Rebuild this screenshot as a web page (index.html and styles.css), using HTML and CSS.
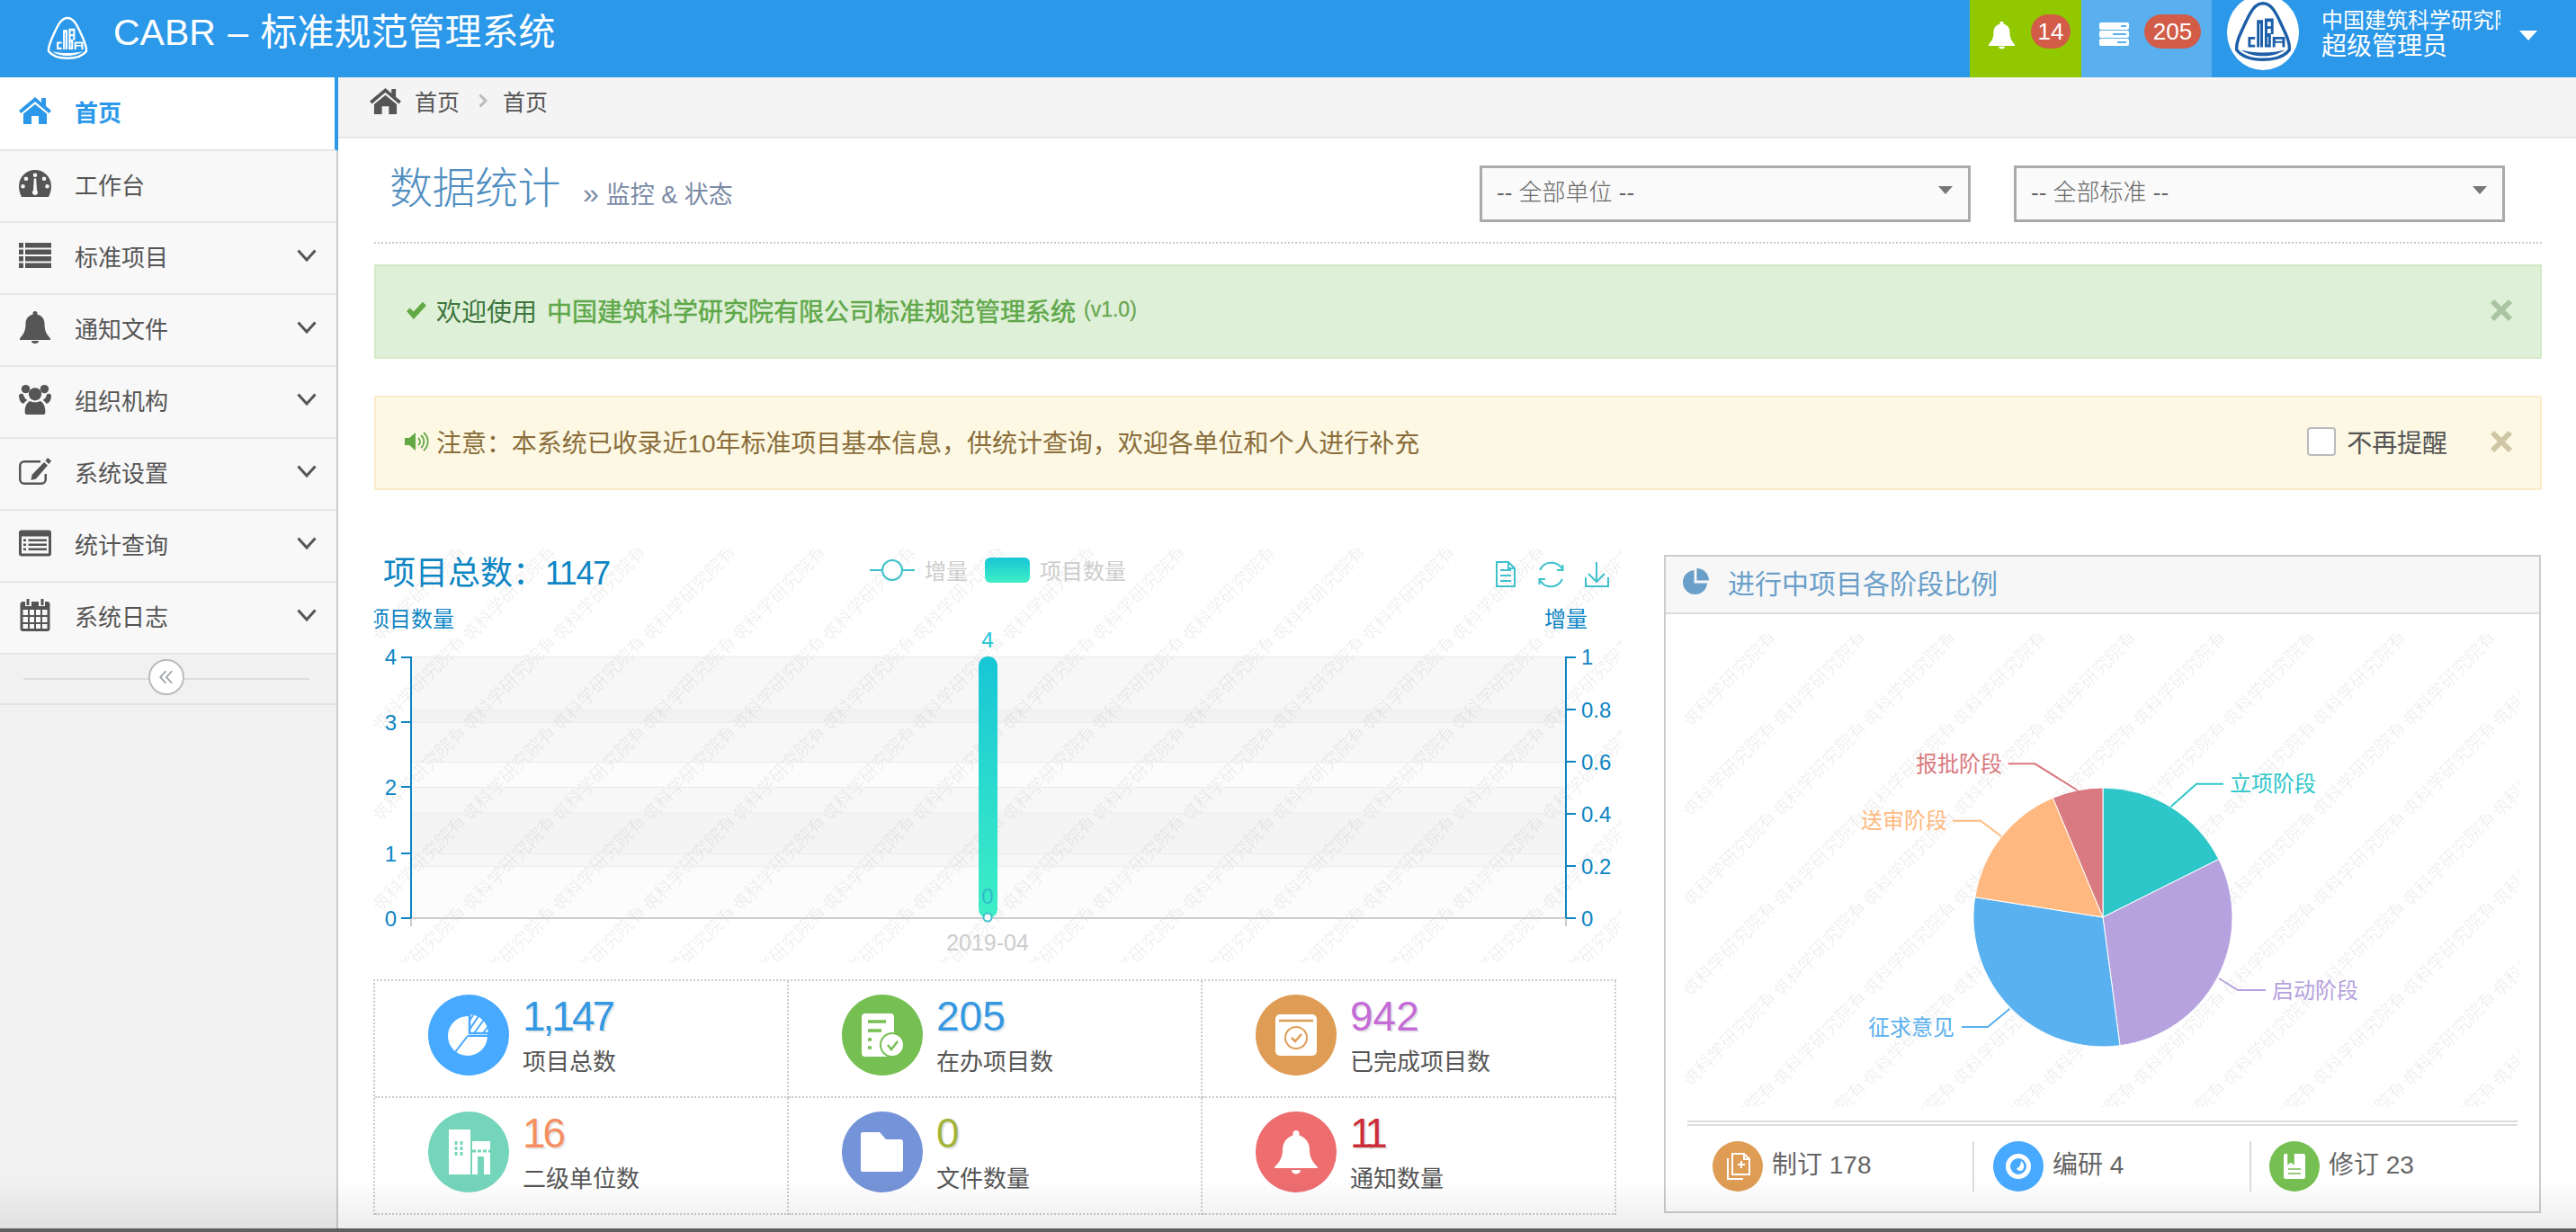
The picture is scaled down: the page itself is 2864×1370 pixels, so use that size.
FILE: index.html
```html
<!DOCTYPE html>
<html lang="zh-CN">
<head>
<meta charset="utf-8">
<title>CABR - 标准规范管理系统</title>
<link rel="stylesheet" href="styles.css">
</head>
<body>
<svg class="defs" width="0" height="0" aria-hidden="true">
  <defs>
    <symbol id="i-home" viewBox="0 0 36 30"><path d="M18 0L0 15l2.500 3L18 5l15.500 13 2.500-3-6-5V1h-5v5zM18 8L5 18.500V30h9v-9h8v9h9V18.500z"/></symbol>
    <symbol id="i-dash" viewBox="0 0 36 30"><path fill-rule="evenodd" d="M18 0A18 18 0 0 0 0 18c0 4 1 8 3 12h30c2-4 3-8 3-12A18 18 0 0 0 18 0zM18 3.500a2.300 2.300 0 1 1 0 4.600 2.300 2.300 0 0 1 0-4.600zM8 7.500a2.300 2.300 0 1 1 0 4.600 2.300 2.300 0 0 1 0-4.600zM28 7.500a2.300 2.300 0 1 1 0 4.600 2.300 2.300 0 0 1 0-4.600zM4.500 16a2.300 2.300 0 1 1 0 4.600 2.300 2.300 0 0 1 0-4.600zM31.500 16a2.300 2.300 0 1 1 0 4.600 2.300 2.300 0 0 1 0-4.600zM16.800 9.500h2.400l.8 13.200a3 3 0 1 1-4 0z"/></symbol>
    <symbol id="i-list" viewBox="0 0 36 28"><path d="M0 0h5v5.500H0zM7 0h29v5.500H7zM0 7.500h5V13H0zM7 7.500h29V13H7zM0 15h5v5.500H0zM7 15h29v5.500H7zM0 22.500h5V28H0zM7 22.500h29V28H7z"/></symbol>
    <symbol id="i-bell" viewBox="0 0 34 36"><path d="M17 0a2.500 2.500 0 0 1 2.500 2.500v1.200C25 5 27.500 9 27.500 14c0 9 3 12 6.500 16.500V32H0v-1.500C3.500 26 6.500 23 6.500 14 6.500 9 9 5 14.500 3.700V2.500A2.500 2.500 0 0 1 17 0zM13 33h8a4 3 0 0 1-8 0z"/></symbol>
    <symbol id="i-group" viewBox="0 0 38 36"><circle cx="8" cy="6" r="5"/><circle cx="30" cy="6" r="5"/><circle cx="19" cy="12" r="7.500"/><path d="M0 13c2-2 4-2 5-1 1 4 3 6 5 7-2 1-3 2-4 4-3 0-6-3-6-10zM38 13c-2-2-4-2-5-1-1 4-3 6-5 7 2 1 3 2 4 4 3 0 6-3 6-10zM10 36c-2 0-3-1-3-3 0-7 2-11 6-13 3 2 9 2 12 0 4 2 6 6 6 13 0 2-1 3-3 3z"/></symbol>
    <symbol id="i-edit" viewBox="0 0 36 30"><path d="M6 3h18v2.500H6A3.500 3.500 0 0 0 2.500 9v15A3.500 3.500 0 0 0 6 27.500h19a3.500 3.500 0 0 0 3.500-3.500v-6H31v6a6 6 0 0 1-6 6H6a6 6 0 0 1-6-6V9a6 6 0 0 1 6-6z"/><path d="M32 0l4 3.500L33.500 7l-4-3.500zM28 5l4 3.500-13 15-5.500 1.500 1-6z"/></symbol>
    <symbol id="i-listalt" viewBox="0 0 36 29"><path fill-rule="evenodd" d="M3 0h30a3 3 0 0 1 3 3v23a3 3 0 0 1-3 3H3a3 3 0 0 1-3-3V3a3 3 0 0 1 3-3zM3 7v19h30V7z"/><path d="M5 10h3v2.500H5zM10.500 10H31v2.500H10.500zM5 15h3v2.500H5zM10.500 15H31v2.500H10.500zM5 20h3v2.500H5zM10.500 20H31v2.500H10.500z"/></symbol>
    <symbol id="i-cal" viewBox="0 0 33 36"><path fill-rule="evenodd" d="M7 0h3v7H7zM23 0h3v7h-3zM3 3h2.500v5h7V3h8v5h7V3H30a3 3 0 0 1 3 3v27a3 3 0 0 1-3 3H3a3 3 0 0 1-3-3V6a3 3 0 0 1 3-3zM3 12v6h5.500v-6zM10.500 12v6h5v-6zM17.500 12v6h5v-6zM24.500 12v6H30v-6zM3 20v6h5.500v-6zM10.500 20v6h5v-6zM17.500 20v6h5v-6zM24.500 20v6H30v-6zM3 28v5h5.500v-5zM10.500 28v5h5v-5zM17.500 28v5h5v-5zM24.500 28v5H30v-5z"/></symbol>
    <symbol id="i-chev" viewBox="0 0 22 14"><path d="M1.500 1.500L11 12l9.500-10.500" fill="none" stroke="currentColor" stroke-width="3"/></symbol>
    <symbol id="i-logo" viewBox="0 0 80 80">
      <path d="M40 7C49 7 54 16 60 29c6 13 11 22 10 31-6 8-18 11-30 11s-24-3-30-11c-1-9 4-18 10-31C26 16 31 7 40 7z" fill="none" stroke="currentColor" stroke-width="3.500"/>
      <path d="M15 60c7 5 16 7 25 7s18-2 25-7c-7 2-16 3-25 3s-18-1-25-3z"/>
      <path d="M23 57V45h8v3h-5v6h5v3zM33 57V26h7v31h-3V30h-1v27zM42 57V24h10v18h-3v15h-7zM45 28v5h4v-5zM45 36v5h4v-5zM45 45v9h1v-9zM51 57V45h14v12h-3v-5h-8v5zM54 48v2h8v-2z"/>
    </symbol>
    <pattern id="wm-chart" patternUnits="userSpaceOnUse" x="416" y="610" width="100" height="100">
      <text class="wm-text" transform="translate(50 50) rotate(-46)" text-anchor="middle" dominant-baseline="central">中国建筑科学研究院有限公司</text>
    </pattern>
    <pattern id="wm-pie" patternUnits="userSpaceOnUse" x="1873" y="705" width="100" height="100">
      <text class="wm-text" transform="translate(50 50) rotate(-46)" text-anchor="middle" dominant-baseline="central">中国建筑科学研究院有限公司</text>
    </pattern>
    <linearGradient id="bar-g" x1="0" y1="0" x2="0" y2="1">
      <stop offset="0" stop-color="#17c6d6"/><stop offset="1" stop-color="#3eefc6"/>
    </linearGradient>
  </defs>
</svg>

<div class="app">
  <header class="topbar">
    <svg class="brand-logo"><use href="#i-logo"/></svg>
    <div class="brand-title">CABR – 标准规范管理系统</div>
    <div class="top-notice">
      <svg class="top-bell"><use href="#i-bell"/></svg>
      <span class="badge">14</span>
    </div>
    <div class="top-tasks">
      <svg class="top-server" viewBox="0 0 33 26">
        <path fill="#fff" d="M2 0h29a2 2 0 0 1 2 2v4a2 2 0 0 1-2 2H2a2 2 0 0 1-2-2V2a2 2 0 0 1 2-2zM2 9h29a2 2 0 0 1 2 2v4a2 2 0 0 1-2 2H2a2 2 0 0 1-2-2v-4a2 2 0 0 1 2-2zM2 18h29a2 2 0 0 1 2 2v4a2 2 0 0 1-2 2H2a2 2 0 0 1-2-2v-4a2 2 0 0 1 2-2z"/>
        <path fill="#5aafef" d="M24 3h6v2h-6zM15 12h15v2H15zM20 21h10v2H20z"/>
      </svg>
      <span class="badge badge-wide">205</span>
    </div>
    <div class="top-user">
      <div class="avatar"><svg class="avatar-logo"><use href="#i-logo"/></svg></div>
      <div class="user-text">
        <div class="user-org">中国建筑科学研究院有限公司</div>
        <div class="user-role">超级管理员</div>
      </div>
      <span class="user-caret"></span>
    </div>
  </header>

  <div class="layout">
    <nav class="sidebar">
      <ul class="menu">
        <li class="menu-item active"><svg class="menu-icon"><use href="#i-home"/></svg><span>首页</span></li>
        <li class="menu-item"><svg class="menu-icon"><use href="#i-dash"/></svg><span>工作台</span></li>
        <li class="menu-item"><svg class="menu-icon"><use href="#i-list"/></svg><span>标准项目</span><svg class="menu-chev"><use href="#i-chev"/></svg></li>
        <li class="menu-item"><svg class="menu-icon"><use href="#i-bell"/></svg><span>通知文件</span><svg class="menu-chev"><use href="#i-chev"/></svg></li>
        <li class="menu-item"><svg class="menu-icon"><use href="#i-group"/></svg><span>组织机构</span><svg class="menu-chev"><use href="#i-chev"/></svg></li>
        <li class="menu-item"><svg class="menu-icon"><use href="#i-edit"/></svg><span>系统设置</span><svg class="menu-chev"><use href="#i-chev"/></svg></li>
        <li class="menu-item"><svg class="menu-icon"><use href="#i-listalt"/></svg><span>统计查询</span><svg class="menu-chev"><use href="#i-chev"/></svg></li>
        <li class="menu-item"><svg class="menu-icon"><use href="#i-cal"/></svg><span>系统日志</span><svg class="menu-chev"><use href="#i-chev"/></svg></li>
      </ul>
      <div class="collapser">
        <span class="collapse-btn">
          <svg class="collapse-ico" viewBox="0 0 16 16"><path d="M7.500 2L2 8l5.500 6M13.500 2L8 8l5.500 6" fill="none" stroke="#9aa0a6" stroke-width="1.600"/></svg>
        </span>
      </div>
    </nav>

    <main class="main">
      <div class="crumbs">
        <svg class="crumb-home"><use href="#i-home"/></svg>
        <span>首页</span>
        <svg class="crumb-sep" viewBox="0 0 10 16"><path d="M1.500 1.500L8 8l-6.500 6.500" fill="none" stroke="#bbb" stroke-width="3"/></svg>
        <span>首页</span>
      </div>

      <div class="content">
        <div class="page-head">
          <h1 class="page-title">数据统计<small class="page-sub"><span class="page-sub-mark">»</span>监控 &amp; 状态</small></h1>
          <div class="selects">
            <div class="select"><span>-- 全部单位 --</span><i class="select-caret"></i></div>
            <div class="select"><span>-- 全部标准 --</span><i class="select-caret"></i></div>
          </div>
        </div>

        <div class="alert alert-ok">
          <svg class="alert-ico" viewBox="0 0 24 20"><path d="M2 11l3.500-3.500 4 4L19 1l4 4L9.500 19.500z" fill="#62a944"/></svg>
          <span>欢迎使用</span>
          <b class="alert-strong">中国建筑科学研究院有限公司标准规范管理系统</b>
          <span class="alert-ver">(v1.0)</span>
          <svg class="alert-close" viewBox="0 0 26 26"><path d="M3 3l20 20M23 3L3 23" stroke="#aac5a2" stroke-width="6"/></svg>
        </div>

        <div class="alert alert-warn">
          <svg class="alert-ico alert-ico-sound" viewBox="0 0 27 24">
            <path d="M0 8h5l7-6v20l-7-6H0z" fill="#62a944"/>
            <path d="M15 8a5 5 0 0 1 0 8M18 5a9 9 0 0 1 0 14M21 2a13 13 0 0 1 0 20" fill="none" stroke="#62a944" stroke-width="1.800"/>
          </svg>
          <span>注意：本系统已收录近10年标准项目基本信息，供统计查询，欢迎各单位和个人进行补充</span>
          <label class="alert-check"><i class="checkbox"></i>不再提醒</label>
          <svg class="alert-close alert-close-warn" viewBox="0 0 26 26"><path d="M3 3l20 20M23 3L3 23" stroke="#cfc6a6" stroke-width="6"/></svg>
        </div>

        <div class="dash">
          <section class="dash-left">
            <svg class="chart" viewBox="416 590 1386 480">
              <rect x="416" y="610" width="1386" height="460" fill="url(#wm-chart)"/>
              <g class="bands">
                <rect x="457" y="730" width="1284" height="59" fill="#000" fill-opacity=".03"/>
                <rect x="457" y="789" width="1284" height="14" fill="#000" fill-opacity=".05"/>
                <rect x="457" y="803" width="1284" height="44" fill="#000" fill-opacity=".03"/>
                <rect x="457" y="847" width="1284" height="28" fill="#000" fill-opacity=".012"/>
                <rect x="457" y="875" width="1284" height="29" fill="#000" fill-opacity=".03"/>
                <rect x="457" y="904" width="1284" height="45" fill="#000" fill-opacity=".045"/>
                <rect x="457" y="949" width="1284" height="14" fill="#000" fill-opacity=".03"/>
                <rect x="457" y="963" width="1284" height="58" fill="#000" fill-opacity=".012"/>
              </g>
              <path class="split" d="M457 730.500H1741M457 789.500H1741M457 803.500H1741M457 847.500H1741M457 875.500H1741M457 904.500H1741M457 949.500H1741M457 963.500H1741"/>
              <path class="x-axis" d="M457 1021H1741M457 1021v9M1741 1021v9"/>
              <path class="y-axis" d="M457 730v291M446 731h11M446 803h11M446 875h11M446 949h11M446 1021h11M1741 730v291M1741 731h11M1741 789h11M1741 847h11M1741 905h11M1741 963h11M1741 1021h11"/>
              <text class="c-title" x="426" y="637">项目总数：<tspan class="c-title-num">1147</tspan></text>
              <g class="c-legend">
                <path class="leg-line" d="M967 634h14M1003 634h14"/>
                <circle class="leg-line" cx="992" cy="634" r="11"/>
                <text x="1028" y="635">增量</text>
                <rect x="1095" y="620" width="50" height="28" rx="6" fill="url(#bar-g)"/>
                <text x="1156" y="635">项目数量</text>
              </g>
              <g class="tool">
                <path d="M1664 625h13l7 7v20h-20zM1677 625v7h7M1668 634h12M1668 640h12M1668 646h12"/>
                <path d="M1712 634a14 14 0 0 1 25-1M1737 644a14 14 0 0 1-25 1M1731 634h6.500v-6M1718 644h-6.500v6"/>
                <path d="M1775 625v22M1766 638l9 9 9-9M1763 642v10h25v-10"/>
              </g>
              <text class="c-axis-name" x="457" y="688" text-anchor="middle">项目数量</text>
              <text class="c-axis-name" x="1741" y="688" text-anchor="middle">增量</text>
              <g class="c-tick" text-anchor="end">
                <text x="441" y="730">4</text><text x="441" y="803">3</text><text x="441" y="875">2</text><text x="441" y="949">1</text><text x="441" y="1021">0</text>
              </g>
              <g class="c-tick">
                <text x="1758" y="730">1</text><text x="1758" y="789">0.8</text><text x="1758" y="847">0.6</text><text x="1758" y="905">0.4</text><text x="1758" y="963">0.2</text><text x="1758" y="1021">0</text>
              </g>
              <rect x="1088" y="730" width="21" height="291" rx="10" fill="url(#bar-g)"/>
              <text class="c-val" x="1098" y="711" text-anchor="middle">4</text>
              <text class="c-val c-val-in" x="1098" y="996" text-anchor="middle">0</text>
              <circle class="c-dot" cx="1098" cy="1020" r="4.500"/>
              <text class="c-date" x="1098" y="1048" text-anchor="middle">2019-04</text>
            </svg>

            <div class="stats">
              <div class="stat">
                <span class="stat-ico bg-blue">
                  <svg class="stat-svg" viewBox="0 0 50 50"><circle cx="24" cy="26" r="22" fill="#fff"/><path d="M26 1a22 22 0 0 1 22 22H26z" fill="#fff" stroke="#47a9ff" stroke-width="2.500"/><path d="M30 3l-4 6M36 4L26 19M42 8L31 23M47 15l-6 8" stroke="#47a9ff" stroke-width="2"/><path d="M24 26L10 44M24 26h22" stroke="#47a9ff" stroke-width="2"/></svg>
                </span>
                <div class="stat-body"><div class="stat-num c-blue n-tight">1,147</div><div class="stat-label">项目总数</div></div>
              </div>
              <div class="stat">
                <span class="stat-ico bg-green">
                  <svg class="stat-svg" viewBox="0 0 50 50"><path d="M6 1h28a4 4 0 0 1 4 4v44H6a4 4 0 0 1-4-4V5a4 4 0 0 1 4-4z" fill="#fff"/><path d="M9 10h20M9 20h15M9 30h4M9 39h4" stroke="#76bf52" stroke-width="3.500"/><circle cx="36" cy="36" r="13" fill="#fff" stroke="#76bf52" stroke-width="2"/><path d="M31 36l4 5 7-9" fill="none" stroke="#76bf52" stroke-width="2.500"/></svg>
                </span>
                <div class="stat-body"><div class="stat-num c-blue">205</div><div class="stat-label">在办项目数</div></div>
              </div>
              <div class="stat">
                <span class="stat-ico bg-orange">
                  <svg class="stat-svg" viewBox="0 0 50 50"><rect x="2" y="2" width="46" height="46" rx="5" fill="#fff"/><path d="M6 9h38" stroke="#de9c55" stroke-width="2.500"/><circle cx="25" cy="28" r="12" fill="none" stroke="#de9c55" stroke-width="2"/><path d="M20 28l4 4 7-8" fill="none" stroke="#de9c55" stroke-width="2.500"/></svg>
                </span>
                <div class="stat-body"><div class="stat-num c-purple">942</div><div class="stat-label">已完成项目数</div></div>
              </div>
              <div class="stat">
                <span class="stat-ico bg-teal">
                  <svg class="stat-svg" viewBox="0 0 50 50"><path d="M3 0h24v50H3zM29 13h20v37h-7V30H35v20h-6z" fill="#fff"/><path d="M11 13v18M17 13v18M29 24h20" stroke="#74d5bb" stroke-width="3" stroke-dasharray="4 2"/></svg>
                </span>
                <div class="stat-body"><div class="stat-num c-coral n-tight">16</div><div class="stat-label">二级单位数</div></div>
              </div>
              <div class="stat">
                <span class="stat-ico bg-indigo">
                  <svg class="stat-svg" viewBox="0 0 50 50"><path d="M3 3h19l7 8h16a3 3 0 0 1 3 3v30a3 3 0 0 1-3 3H3a2 2 0 0 1-2-2V5a2 2 0 0 1 2-2z" fill="#fff"/></svg>
                </span>
                <div class="stat-body"><div class="stat-num c-olive">0</div><div class="stat-label">文件数量</div></div>
              </div>
              <div class="stat">
                <span class="stat-ico bg-red">
                  <svg class="stat-svg" viewBox="0 0 50 50"><path d="M25 1a3.500 3.500 0 0 1 3.500 3.500v2C36 9 40 15 40 23c0 8 4 14 9 19v1H1v-1c5-5 9-11 9-19 0-8 4-14 11.500-16.500v-2A3.500 3.500 0 0 1 25 1zM20 45h10a5 4.500 0 0 1-10 0z" fill="#fff"/></svg>
                </span>
                <div class="stat-body"><div class="stat-num c-crimson n-tighter">11</div><div class="stat-label">通知数量</div></div>
              </div>
            </div>
          </section>

          <section class="panel">
            <div class="panel-head">
              <svg class="panel-ico" viewBox="0 0 30 30"><path d="M13 2v15h15a14 14 0 1 1-15-15z" fill="#6a9fc9"/><path d="M16 0a14 14 0 0 1 14 14H16z" fill="#6a9fc9"/></svg>
              <span>进行中项目各阶段比例</span>
            </div>
            <svg class="pie" viewBox="1852 683 971 557">
              <rect x="1873" y="705" width="928" height="526" fill="url(#wm-pie)"/>
              <g class="pie-slices">
                <path fill="#2ec7c9" d="M2338 1020V876A144 144 0 0 1 2466.800 955.500z"/>
                <path fill="#b6a2de" d="M2338 1020L2466.800 955.500A144 144 0 0 1 2357 1162.700z"/>
                <path fill="#5ab1ef" d="M2338 1020L2357 1162.700A144 144 0 0 1 2195.700 997.700z"/>
                <path fill="#ffb980" d="M2338 1020L2195.700 997.700A144 144 0 0 1 2282.400 887.200z"/>
                <path fill="#d87a80" d="M2338 1020L2282.400 887.200A144 144 0 0 1 2338 876z"/>
              </g>
              <g class="pie-lines">
                <path stroke="#2ec7c9" d="M2413.600 897L2442 871.700H2472"/>
                <path stroke="#b6a2de" d="M2467 1088L2488 1101H2519"/>
                <path stroke="#5ab1ef" d="M2234.500 1121.700L2210 1142H2181"/>
                <path stroke="#ffb980" d="M2225 930L2202 912.700H2171"/>
                <path stroke="#d87a80" d="M2310 879L2262.400 849.300H2232.500"/>
              </g>
              <g class="pie-labels">
                <text x="2479" y="871" fill="#2ec7c9">立项阶段</text>
                <text x="2526" y="1101" fill="#b6a2de">启动阶段</text>
                <text x="2173" y="1142" fill="#5ab1ef" text-anchor="end">征求意见</text>
                <text x="2165" y="912" fill="#ffb980" text-anchor="end">送审阶段</text>
                <text x="2226" y="849" fill="#d87a80" text-anchor="end">报批阶段</text>
              </g>
            </svg>
            <div class="panel-rule"></div>
            <div class="kinds">
              <div class="kind">
                <span class="kind-ico bg-orange"><svg class="kind-svg" viewBox="0 0 28 30"><path d="M8 1h13l6 6v17H8zM21 1v6h6M14 13h8M18 9v8" fill="none" stroke="#fff" stroke-width="2"/><path d="M3 6v23h17" fill="none" stroke="#fff" stroke-width="2"/></svg></span>
                <span class="kind-text">制订 178</span>
              </div>
              <div class="kind">
                <span class="kind-ico bg-blue"><svg class="kind-svg" viewBox="0 0 30 30"><circle cx="15" cy="15" r="11.500" fill="none" stroke="#fff" stroke-width="5"/><path d="M18 9a7 7 0 0 1 2 10c-3 2-6 1-7-2 3 0 5-4 5-8z" fill="#fff"/></svg></span>
                <span class="kind-text">编研 4</span>
              </div>
              <div class="kind">
                <span class="kind-ico bg-green"><svg class="kind-svg" viewBox="0 0 28 30"><rect x="2" y="1" width="24" height="28" rx="2" fill="#fff"/><path d="M7 1h6v11l-3-2-3 2zM7 18h14M7 23h14" fill="#76bf52" stroke="#76bf52" stroke-width="1.500"/></svg></span>
                <span class="kind-text">修订 23</span>
              </div>
            </div>
          </section>
        </div>
      </div>
    </main>
  </div>
  <div class="page-fade"></div>
  <div class="page-foot"></div>
</div>
</body>
</html>
```

FILE: styles.css
```css
* { box-sizing: border-box; }
html, body { margin: 0; padding: 0; }
body {
  font-family: "Liberation Sans", "Noto Sans CJK SC", sans-serif;
  color: #555;
  background: #fff;
}
.defs { position: absolute; }
.app {
  position: relative;
  width: 2864px;
  height: 1370px;
  overflow: hidden;
  display: flex;
  flex-direction: column;
}

/* top bar */
.topbar {
  flex: 0 0 86px;
  display: flex;
  align-items: center;
  background: #2b98e9;
  color: #fff;
}
.brand-logo { width: 56px; height: 56px; margin-left: 47px; color: #fff; fill: #fff; }
.brand-title {
  flex: 1;
  margin-left: 23px;
  margin-bottom: 14px;
  font-size: 41px;
  line-height: 72px;
  word-spacing: 2px;
}
.top-notice, .top-tasks {
  align-self: stretch;
  display: flex;
  align-items: center;
  padding-bottom: 16px;
}
.top-notice { width: 124px; padding-left: 21px; background: #91c800; }
.top-tasks { width: 145px; padding-left: 20px; background: #5aafef; }
.top-bell { width: 29px; height: 32px; fill: #fff; margin-top: 8px; margin-right: 18px; }
.top-server { width: 33px; height: 26px; margin-top: 6px; margin-right: 17px; }
.badge {
  min-width: 44px;
  height: 38px;
  padding: 0 7px;
  border-radius: 19px;
  background: #d25c48;
  color: #fff;
  font-size: 26px;
  line-height: 38px;
  text-align: center;
}
.badge-wide { min-width: 63px; }
.top-user { align-self: stretch; display: flex; align-items: flex-start; flex: 0 0 405px; }
.avatar {
  width: 80px;
  height: 84px;
  margin: -6px 0 0 17px;
  border-radius: 50%;
  background: #fff;
  display: flex;
  align-items: center;
  justify-content: center;
}
.avatar-logo { width: 78px; height: 78px; color: #1c5fa8; fill: #1c5fa8; }
.user-text { width: 199px; margin-left: 25px; padding-top: 8px; overflow: hidden; white-space: nowrap; }
.user-org { font-size: 24px; line-height: 29px; }
.user-role { font-size: 28px; line-height: 29px; }
.user-caret {
  margin: 34px 0 0 21px;
  border-left: 10px solid transparent;
  border-right: 10px solid transparent;
  border-top: 11px solid #fff;
}

/* layout */
.layout { flex: 1; display: flex; min-height: 0; }
.sidebar {
  flex: 0 0 376px;
  background: #f1f1f1;
  border-right: 2px solid #ccc;
}
.menu { list-style: none; margin: 0; padding: 0; }
.menu-item {
  display: flex;
  align-items: center;
  height: 80px;
  padding: 0 0 6px 21px;
  background: #f8f8f8;
  border-bottom: 2px solid #e6e6e6;
  font-size: 26px;
  color: #555;
}
.menu-item.active {
  position: relative;
  height: 82px;
  margin-right: -2px;
  background: #fff;
  border-right: 4px solid #2b98e9;
  color: #2b98e9;
  font-weight: 700;
}
.menu-icon { width: 36px; height: 36px; margin-right: 26px; fill: currentColor; }
.menu-chev { width: 22px; height: 14px; margin-left: auto; margin-right: 22px; color: #555; }
.collapser {
  position: relative;
  height: 56px;
  display: flex;
  align-items: center;
  justify-content: center;
  padding-bottom: 4px;
  border-bottom: 2px solid #e2e2e2;
}
.collapser::before {
  content: "";
  position: absolute;
  left: 26px;
  right: 30px;
  top: 26px;
  height: 2px;
  background: #ddd;
}
.collapse-btn {
  position: relative;
  width: 40px;
  height: 40px;
  margin-right: 4px;
  border: 2px solid #bbb;
  border-radius: 50%;
  background: #fff;
  display: flex;
  align-items: center;
  justify-content: center;
}
.collapse-ico { width: 18px; height: 18px; }

.main { flex: 1; min-width: 0; }
.crumbs {
  height: 68px;
  display: flex;
  align-items: center;
  padding: 0 0 14px 35px;
  background: #f4f4f4;
  border-bottom: 2px solid #e6e6e6;
  font-size: 25px;
  color: #555;
}
.crumb-home { width: 35px; height: 29px; margin-right: 15px; fill: #555; }
.crumb-sep { width: 10px; height: 16px; margin: 0 17px 0 21px; }
.content { padding: 0 38px 0 40px; }

.page-head {
  display: flex;
  justify-content: space-between;
  height: 117px;
  border-bottom: 2px dotted #ccc;
}
.page-title {
  margin: 26px 0 0 17px;
  font-size: 48px;
  line-height: 60px;
  font-weight: 300;
  color: #4f8dbf;
  letter-spacing: -0.5px;
}
.page-sub { margin-left: 25px; font-size: 27px; font-weight: 400; color: #7a8aa5; letter-spacing: 0; }
.page-sub-mark { margin-right: 8px; font-size: 32px; }
.selects { display: flex; gap: 48px; margin: 30px 41px 0 0; }
.select {
  width: 546px;
  height: 63px;
  display: flex;
  align-items: center;
  justify-content: space-between;
  padding: 0 17px 8px 16px;
  border: 3px solid #aaa;
  background: #fafafa;
  font-size: 26px;
  font-weight: 300;
  color: #666;
}
.select-caret {
  border-left: 8px solid transparent;
  border-right: 8px solid transparent;
  border-top: 9px solid #777;
}

.alert {
  display: flex;
  align-items: center;
  height: 105px;
  padding: 0 30px 4px 32px;
  border: 2px solid;
  font-size: 28px;
}
.alert-ok { margin-top: 23px; background: #dff0d8; border-color: #d6e9c6; color: #3c763d; }
.alert-warn { margin-top: 41px; background: #fcf8e3; border-color: #faebcc; color: #8a6d3b; letter-spacing: -0.05px; }
.alert-ico { width: 25px; height: 22px; margin-right: 10px; flex: none; }
.alert-ico-sound { width: 27px; height: 24px; margin-right: 8px; }
.alert-strong { margin-left: 11px; color: #5fa84a; font-weight: 400; -webkit-text-stroke: .5px #5fa84a; }
.alert-ver { margin-left: 9px; font-size: 23px; color: #6aa651; -webkit-text-stroke: .3px #6aa651; }
.alert-close { width: 26px; height: 26px; margin-left: auto; flex: none; }
.alert-close-warn { margin-left: 47px; }
.alert-check { margin-left: auto; display: flex; align-items: center; color: #555; }
.checkbox {
  width: 32px;
  height: 32px;
  margin-right: 12px;
  background: #fff;
  border: 2px solid #bbb;
  border-radius: 4px;
}

.dash { display: flex; align-items: flex-start; justify-content: space-between; margin-top: 45px; padding-right: 1px; }
.dash-left { width: 1386px; }
.chart { display: block; width: 1386px; height: 480px; }
.wm-text { font-size: 20px; font-weight: 300; fill: rgba(0, 0, 0, .08); }
.split { fill: none; stroke: #eee; stroke-width: 1.500; }
.x-axis { fill: none; stroke: #ccc; stroke-width: 2; }
.y-axis { fill: none; stroke: #0d85c3; stroke-width: 2; }
.c-title { font-size: 36px; fill: #0d85c3; dominant-baseline: central; }
.c-title-num { letter-spacing: -1.500px; }
.c-legend text { font-size: 24px; fill: #ccc; dominant-baseline: central; }
.leg-line { fill: #fff; stroke: #3ec1cc; stroke-width: 2; }
.tool path { fill: none; stroke: #3ec1cc; stroke-width: 2; }
.c-axis-name { font-size: 24px; fill: #0d85c3; dominant-baseline: central; }
.c-tick text { font-size: 24px; fill: #0d85c3; dominant-baseline: central; }
.c-val { font-size: 24px; fill: #25c5d5; dominant-baseline: central; }
.c-val-in { fill: #2cbcc8; }
.c-dot { fill: #fff; stroke: #3ec1cc; stroke-width: 2; }
.c-date { font-size: 25px; fill: #ccc; dominant-baseline: central; }

.stats {
  display: grid;
  grid-template-columns: repeat(3, 460px);
  grid-template-rows: repeat(2, 130px);
  width: 1382px;
  margin: 19px 0 0 -1px;
  border-top: 2px dotted #ccc;
  border-left: 2px dotted #ccc;
}
.stat {
  display: flex;
  align-items: flex-start;
  padding: 15px 0 0 59px;
  border-right: 2px dotted #ccc;
  border-bottom: 2px dotted #ccc;
}
.stat-ico {
  flex: none;
  width: 90px;
  height: 90px;
  border-radius: 50%;
  display: flex;
  align-items: center;
  justify-content: center;
}
.stat-svg { width: 50px; height: 50px; }
.stat-body { margin-left: 15px; }
.stat-num { font-size: 46px; line-height: 48px; font-weight: 300; text-shadow: 2px 2px 0 rgba(0, 0, 0, .1); }
.n-tight { letter-spacing: -3px; }
.n-tighter { letter-spacing: -6px; }
.stat-label { font-size: 26px; line-height: 32px; margin-top: 11px; color: #555; }
.bg-blue { background: #47a9ff; }
.bg-green { background: #76bf52; }
.bg-orange { background: #de9c55; }
.bg-teal { background: #74d5bb; }
.bg-indigo { background: #7593d8; }
.bg-red { background: #ee6d6f; }
.c-blue { color: #3598e2; }
.c-purple { color: #c46cd6; }
.c-coral { color: #f58f62; }
.c-olive { color: #a2b43a; }
.c-crimson { color: #cb2e3a; }

.panel {
  width: 975px;
  height: 732px;
  margin-top: 27px;
  border: 2px solid #ccc;
  background: #fff;
}
.panel-head {
  height: 64px;
  display: flex;
  align-items: center;
  padding: 0 0 7px 19px;
  background: #f7f7f7;
  border-bottom: 2px solid #ddd;
  font-size: 30px;
  color: #6a9fc9;
}
.panel-ico { width: 29px; height: 29px; margin-right: 21px; }
.pie { display: block; width: 971px; height: 557px; }
.pie-slices path { stroke: #fff; stroke-width: 1; }
.pie-lines path { fill: none; stroke-width: 2; }
.pie-labels text { font-size: 24px; dominant-baseline: central; }
.panel-rule {
  height: 6px;
  margin: 6px 24px 0 24px;
  border-top: 2px solid #ddd;
  border-bottom: 2px solid #ddd;
}
.kinds { display: flex; margin: 17px 24px 0 24px; font-size: 28px; color: #666; }
.kind { display: flex; align-items: center; height: 56px; }
.kind:nth-child(1) { width: 317px; padding-left: 28px; }
.kind:nth-child(2) { width: 308px; padding-left: 21px; border-left: 2px solid #ddd; }
.kind:nth-child(3) { padding-left: 20px; border-left: 2px solid #ddd; }
.kind-ico {
  width: 56px;
  height: 56px;
  margin-right: 10px;
  border-radius: 50%;
  display: flex;
  align-items: center;
  justify-content: center;
}
.kind-svg { width: 30px; height: 30px; }
.kind-text { margin-bottom: 8px; }

.page-fade {
  position: absolute;
  left: 0;
  right: 0;
  bottom: 4px;
  height: 56px;
  pointer-events: none;
  background: linear-gradient(to bottom, rgba(0, 0, 0, 0), rgba(0, 0, 0, .07));
}
.page-foot { flex: 0 0 4px; background: #5f5f5f; }
```
